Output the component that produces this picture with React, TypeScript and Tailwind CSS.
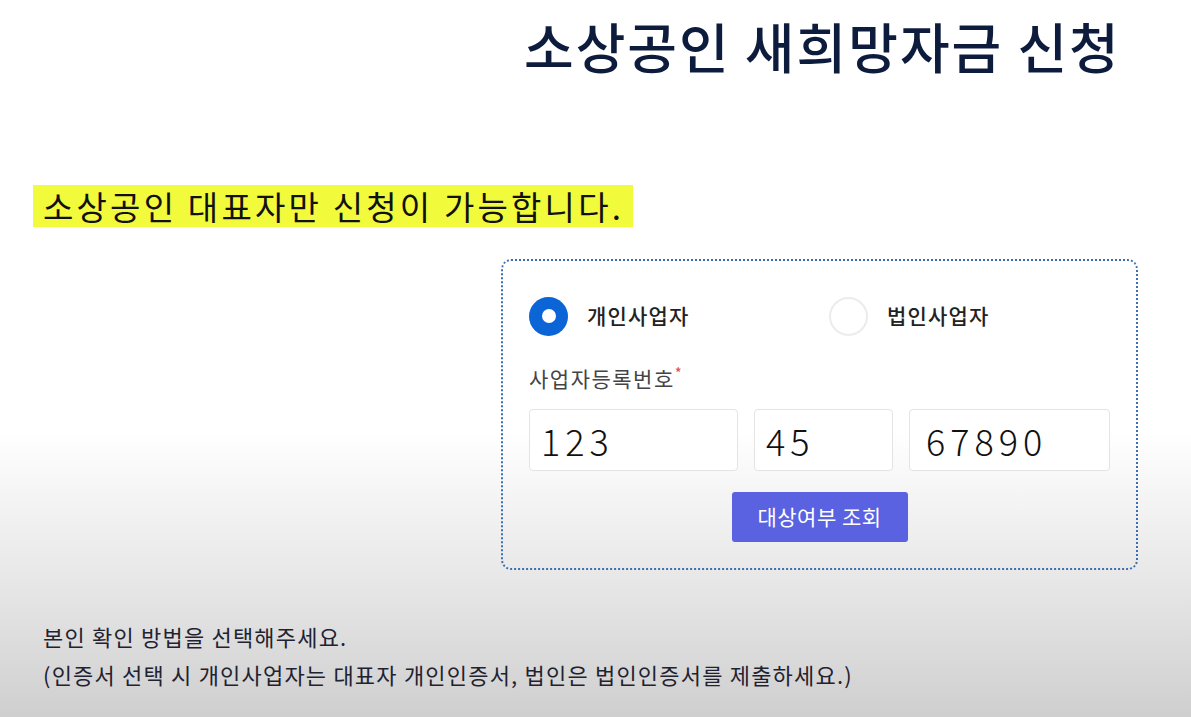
import React from "react";

const font = { fontFamily: '"Noto Sans CJK KR", "Noto Sans", sans-serif' };

export default function App() {
  return (
    <div
      className="w-[1191px] h-[717px] overflow-hidden bg-[linear-gradient(to_bottom,#ffffff_0%,#ffffff_60%,#e6e6e6_82%,#cfcfcf_100%)] flex flex-col"
      style={font}
    >
      <h1 className="pl-[524px] pt-[9px] text-[54px] leading-[74px] font-medium text-[#0d1c3d] tracking-[2px]">
        소상공인 새희망자금 신청
      </h1>

      <div className="pl-[33px] mt-[102px]">
        <span className="inline-block bg-[#f1fb3c] pl-[10px] pr-[9px] h-[42px] leading-[42px] text-[33px] text-[#111] tracking-[3.2px]">
          소상공인 대표자만 신청이 가능합니다.
        </span>
      </div>

      <div className="ml-[501px] mt-[32px] w-[637px] h-[311px] rounded-[10px] border-[2px] border-dotted border-[#3d6fae] pt-[35px] pl-[26px] pr-[26px]">
        <div className="flex items-center h-[40px]">
          <div className="flex items-center w-[300px]">
            <div className="w-[39px] h-[39px] rounded-full bg-[#0b65d6] flex items-center justify-center">
              <div className="w-[14px] h-[14px] rounded-full bg-white" />
            </div>
            <span className="ml-[19px] text-[21px] font-medium text-[#222] tracking-[1.2px] leading-[30px] -mt-[3px]">개인사업자</span>
          </div>
          <div className="flex items-center">
            <div className="w-[39px] h-[39px] rounded-full border-[2px] border-[#ececec] bg-white" />
            <span className="ml-[19px] text-[21px] font-medium text-[#222] tracking-[1.2px] leading-[30px] -mt-[3px]">법인사업자</span>
          </div>
        </div>

        <div className="mt-[28px] text-[21px] leading-[28px] text-[#444] tracking-[1.5px] flex items-start">
          사업자등록번호<span className="text-[#e04848] text-[15px] leading-[18px]">*</span>
        </div>

        <div className="mt-[17px] flex gap-[16px]">
          <div className="w-[209px] h-[62px] rounded-[4px] border border-[#e4e4e4] bg-white flex items-center pl-[11px] text-[36px] font-light tracking-[5px] text-[#111]">
            123
          </div>
          <div className="w-[139px] h-[62px] rounded-[4px] border border-[#e4e4e4] bg-white flex items-center pl-[11px] text-[36px] font-light tracking-[5px] text-[#111]">
            45
          </div>
          <div className="w-[201px] h-[62px] rounded-[4px] border border-[#e4e4e4] bg-white flex items-center pl-[16px] text-[36px] font-light tracking-[5px] text-[#111]">
            67890
          </div>
        </div>

        <div className="mt-[21px] flex justify-center">
          <button className="w-[176px] h-[50px] rounded-[3px] bg-[#5a62e2] text-white text-[21px] tracking-[0.5px]">
            대상여부 조회
          </button>
        </div>
      </div>

      <div className="pl-[43px] mt-[47px] text-[22px] leading-[38px] text-[#1f2230] tracking-[1.2px]">
        <div>본인 확인 방법을 선택해주세요.</div>
        <div>(인증서 선택 시 개인사업자는 대표자 개인인증서, 법인은 법인인증서를 제출하세요.)</div>
      </div>
    </div>
  );
}
